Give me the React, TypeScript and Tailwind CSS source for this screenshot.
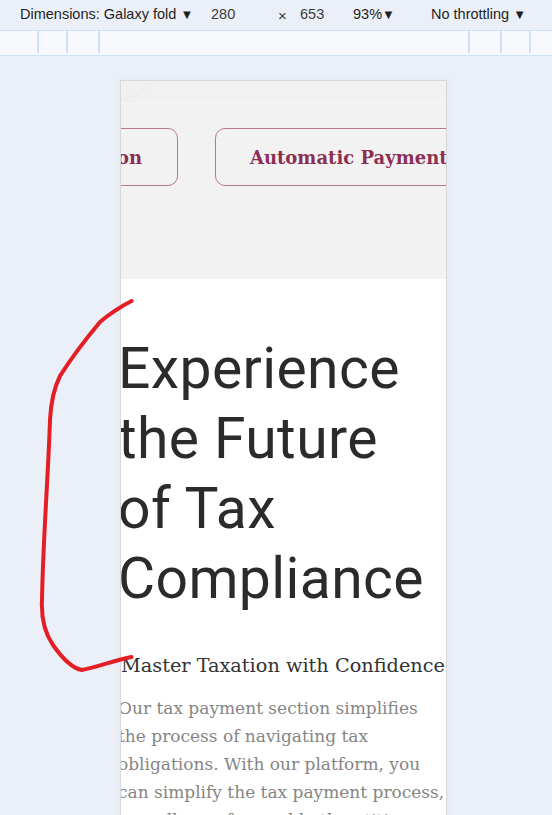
import React from "react";

export default function App() {
  return (
    <div className="relative w-[552px] h-[815px] overflow-hidden bg-[#ebf0f8] font-['Liberation_Sans',sans-serif]">
      {/* DevTools toolbar */}
      <div className="flex h-[30px] items-center text-[14.5px] text-[#1f1f1f]">
        <div className="ml-[20px] w-[191px] whitespace-nowrap">Dimensions: Galaxy fold <span className="text-[13px]">▼</span></div>
        <div className="w-[67px] text-[#3c3c3c]">280</div>
        <div className="w-[22px] text-[15px] text-[#3c3c3c] pt-[3px]">×</div>
        <div className="w-[53px] text-[#3c3c3c]">653</div>
        <div className="w-[78px] whitespace-nowrap">93%<span className="text-[13px]">▼</span></div>
        <div className="whitespace-nowrap">No throttling <span className="text-[13px]">▼</span></div>
      </div>
      {/* Ruler bar */}
      <div className="flex h-[26px] border-y border-[#cfe0fb] bg-[#f7f9fd]">
        <div className="w-[37px]" />
        <div className="w-[2px] h-[22px] bg-[#cfe0fb]" />
        <div className="w-[27px]" />
        <div className="w-[2px] h-[22px] bg-[#cfe0fb]" />
        <div className="w-[30px]" />
        <div className="w-[2px] h-[22px] bg-[#cfe0fb]" />
        <div className="flex-1" />
        <div className="w-[2px] h-[22px] bg-[#cfe0fb]" />
        <div className="w-[30px]" />
        <div className="w-[2px] h-[22px] bg-[#cfe0fb]" />
        <div className="w-[27px]" />
        <div className="w-[2px] h-[22px] bg-[#cfe0fb]" />
        <div className="w-[21px]" />
      </div>

      {/* Device viewport */}
      <div className="pl-[120px] pt-[24px]">
        <div className="w-[327px] h-[760px] overflow-hidden border border-[#d8d8d8] bg-white shadow-[0_0_8px_rgba(0,0,0,0.04)]">
          {/* top grey section */}
          <div className="relative h-[198px] overflow-hidden bg-[#f2f2f2]">
            <div className="h-[23px] border-b border-[#f5f5f5] bg-[#f1f1f1]" />
            <svg className="absolute left-0 top-0" width="60" height="30" viewBox="0 0 60 30">
              <circle cx="-12" cy="-42" r="62" fill="none" stroke="#f2d2cc" strokeWidth="0.8" strokeDasharray="2 1.5" />
              <circle cx="-10" cy="-40" r="42" fill="none" stroke="#e2e8e8" strokeWidth="0.8" strokeDasharray="2 1.5" />
            </svg>
            <div className="mt-[24px] flex gap-[37px] font-['DejaVu_Serif',serif] text-[18px] font-semibold text-[#8d2f55]">
              <div className="ml-[-163px] flex h-[58px] w-[220px] shrink-0 items-center justify-end rounded-[10px] border-[1.5px] border-[#b9788d] pr-[35px] whitespace-nowrap">
                Tax Calculation
              </div>
              <div className="flex h-[58px] w-[270px] shrink-0 items-center rounded-[10px] border-[1.5px] border-[#b9788d] pl-[34px] whitespace-nowrap">
                Automatic Payment
              </div>
            </div>
          </div>

          {/* white content section */}
          <div className="ml-[-3px] pt-[55px]">
            <h1 className="font-['Roboto',sans-serif] text-[57px] leading-[70px] font-normal tracking-[0.4px] text-[#2b2b2b]">
              <div className="whitespace-nowrap">Experience</div>
              <div className="whitespace-nowrap">the Future</div>
              <div className="whitespace-nowrap">of Tax</div>
              <div className="whitespace-nowrap">Compliance</div>
            </h1>
            <h2 className="mt-[38px] ml-[3px] font-['DejaVu_Serif',serif] text-[19.3px] leading-[28px] text-[#333333] whitespace-nowrap">
              Master Taxation with Confidence
            </h2>
            <div className="mt-[14px] ml-[0px] font-['DejaVu_Serif',serif] text-[17px] leading-[28px] text-[#858585]">
              <div className="whitespace-nowrap">Our tax payment section simplifies</div>
              <div className="whitespace-nowrap">the process of navigating tax</div>
              <div className="whitespace-nowrap">obligations. With our platform, you</div>
              <div className="whitespace-nowrap">can simplify the tax payment process,</div>
              <div className="whitespace-nowrap">as well as safeguard both entities</div>
            </div>
          </div>
        </div>
      </div>

      {/* red annotation stroke */}
      <svg className="pointer-events-none absolute left-0 top-0" width="552" height="815" viewBox="0 0 552 815">
        <path
          d="M131.5 301 C118 308, 107 316, 100 322 C85 340, 70 360, 60 376 C54 388, 51 400, 50 420 C48 480, 43 540, 42 600 C41 620, 46 635, 53 645 C60 655, 70 668, 82 670 C95 668, 115 660, 131.5 657"
          fill="none"
          stroke="#e41e25"
          strokeWidth="4"
          strokeLinecap="round"
          strokeLinejoin="round"
        />
      </svg>
    </div>
  );
}
